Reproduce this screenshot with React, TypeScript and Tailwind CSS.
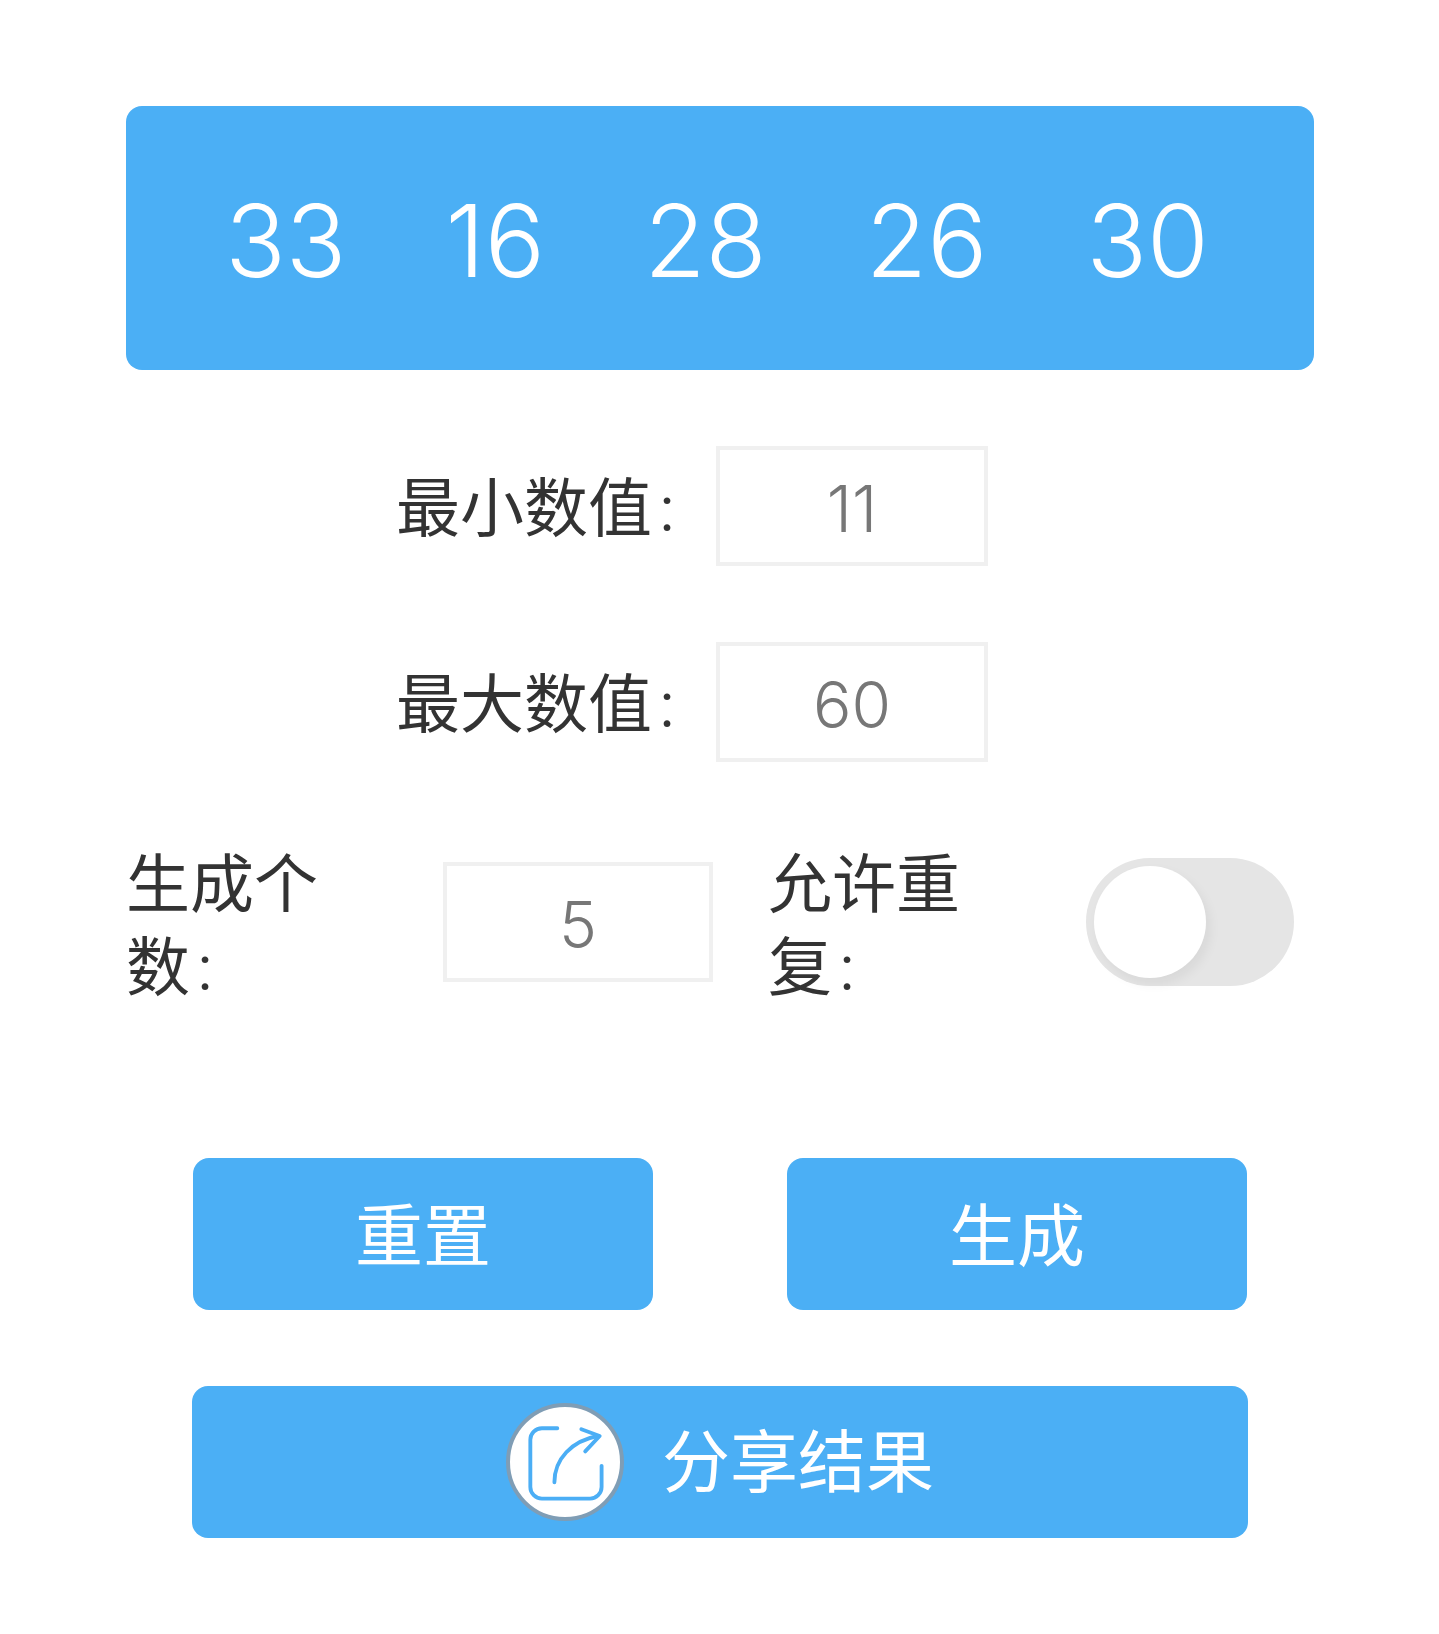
import { useState } from "react";

const numbers = [33, 16, 28, 26, 30];

function ShareIcon() {
  return (
    <span className="flex h-[118px] w-[118px] items-center justify-center rounded-full border-4 border-[#7f9db5] bg-white">
      <svg viewBox="0 0 108 108" className="h-[104px] w-[104px]" fill="none" stroke="#4baef5" strokeWidth="4" strokeLinecap="round" strokeLinejoin="round">
        <path d="M46 19H30a12 12 0 0 0-12 12V80a12 12 0 0 0 12 12H80a12 12 0 0 0 12-12V58" />
        <path d="M43 75C43 51 61 32 88 27" />
        <path d="M71 20l19 7-15 16" />
      </svg>
    </span>
  );
}

function NumberField({ value, width }: { value: number; width: string }) {
  return (
    <input
      defaultValue={value}
      className={`${width} h-[120px] border-4 border-[#f0f0f0] bg-white pt-1 text-center text-[64px] font-light text-[#777] outline-none`}
    />
  );
}

export default function App() {
  const [repeat, setRepeat] = useState(false);

  return (
    <div className="h-[1634px] w-[1439px] overflow-hidden bg-white pt-[106px] font-['Inter','Noto_Sans_CJK_SC',sans-serif] text-[#333]">
      <div className="ml-[126px] flex h-[264px] w-[1188px] items-center justify-evenly rounded-2xl bg-[#4baff5] pt-[6px] pr-[6px] text-[100px] font-light text-white">
        {numbers.map((n, i) => (
          <span key={i}>{n}</span>
        ))}
      </div>

      <div className="mt-[76px] flex items-center pl-[396px]">
        <label className="w-[320px] pt-1 text-[64px]">
          最小数值<span className="ml-[6px] font-light">:</span>
        </label>
        <NumberField value={11} width="w-[272px]" />
      </div>

      <div className="mt-[76px] flex items-center pl-[396px]">
        <label className="w-[320px] pt-1 text-[64px]">
          最大数值<span className="ml-[6px] font-light">:</span>
        </label>
        <NumberField value={60} width="w-[272px]" />
      </div>

      <div className="mt-[74px] flex items-center pl-[126px]">
        <label className="w-[317px] pt-[6px] pr-[110px] text-[64px] leading-[83px]">
          生成个数<span className="ml-[6px] font-light">:</span>
        </label>
        <NumberField value={5} width="w-[270px]" />
        <label className="ml-[55px] w-[318px] pt-[6px] pr-[110px] text-[64px] leading-[83px]">
          允许重复<span className="ml-[6px] font-light">:</span>
        </label>
        <button
          onClick={() => setRepeat(!repeat)}
          className={`flex h-[128px] w-[208px] rounded-full bg-[#e5e5e5] p-2 ${repeat ? "justify-end" : "justify-start"}`}
        >
          <span className="h-[112px] w-[112px] rounded-full bg-white shadow-[4px_6px_12px_rgba(0,0,0,0.06)]" />
        </button>
      </div>

      <div className="mt-[150px] ml-[193px] flex w-[1054px] justify-between text-[68px] text-white">
        <button className="h-[152px] w-[460px] rounded-2xl bg-[#4baff5] pt-1">重置</button>
        <button className="h-[152px] w-[460px] rounded-2xl bg-[#4baff5] pt-1">生成</button>
      </div>

      <button className="mt-[76px] ml-[192px] flex h-[152px] w-[1056px] items-center justify-center gap-[38px] rounded-2xl bg-[#4baff5] text-[68px] text-white">
        <ShareIcon />
        <span>分享结果</span>
      </button>
    </div>
  );
}
